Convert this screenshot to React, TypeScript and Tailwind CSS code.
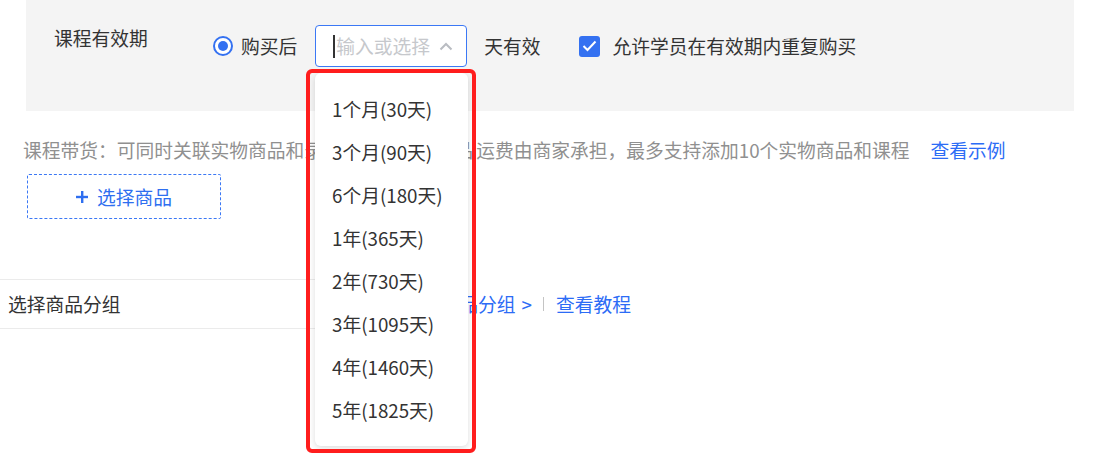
import React from "react";

const BLUE = "text-[#2c6cf6]";

export default function App() {
  const items = [
    "1个月(30天)",
    "3个月(90天)",
    "6个月(180天)",
    "1年(365天)",
    "2年(730天)",
    "3年(1095天)",
    "4年(1460天)",
    "5年(1825天)",
  ];
  return (
    <div
      className="relative w-[1103px] h-[464px] bg-white overflow-hidden text-[#333] text-[18.75px]"
      style={{ fontFamily: '"Noto Sans CJK SC", "Noto Sans", sans-serif' }}
    >
      {/* gray panel */}
      <div className="ml-[26px] w-[1048px] h-[111px] bg-[#f4f4f4] flex pt-[25px]">
        <div className="w-[187px] pl-[28px] leading-[26px]">课程有效期</div>
        <div className="flex items-center h-[42px]">
          <div className="w-[20px] h-[20px] rounded-full border-2 border-[#3471f1] bg-white flex items-center justify-center">
            <div className="w-[10px] h-[10px] rounded-full bg-[#3471f1]" />
          </div>
          <span className="ml-[8px] leading-[26px]">购买后</span>
          <div className="ml-[18px] w-[152px] h-[42px] rounded-[4px] border border-[#3b78f5] bg-white flex items-center pl-[17px] pr-[13px]">
            <div className="w-[2px] h-[23px] bg-[#333]" />
            <span className="ml-[1px] text-[#c6c8cc] leading-[26px]">输入或选择</span>
            <svg className="ml-auto" width="14" height="9" viewBox="0 0 14 9" fill="none">
              <polyline points="1.5,7.5 7,2 12.5,7.5" stroke="#b9bcc2" strokeWidth="2" fill="none" />
            </svg>
          </div>
          <span className="ml-[17px] leading-[26px]">天有效</span>
          <div className="ml-[38px] w-[21px] h-[21px] rounded-[3px] bg-[#3471f1] flex items-center justify-center">
            <svg width="15" height="12" viewBox="0 0 15 12" fill="none">
              <polyline points="1.5,6 5.5,10 13.5,1.5" stroke="white" strokeWidth="2" fill="none" />
            </svg>
          </div>
          <span className="ml-[13px] leading-[26px]">允许学员在有效期内重复购买</span>
        </div>
      </div>

      {/* description */}
      <div className="mt-[26px] pl-[23px] flex items-center leading-[26px] whitespace-nowrap">
        <span className="text-[#909090]">课程带货：可同时关联实物商品和</span>
        <span className="inline-block w-[172px] overflow-hidden text-[#909090]">录播课程，实物商品</span>
        <span className="text-[#909090]">运费由商家承担，最多支持添加10个实物商品和课程</span>
        <span className={`ml-[21px] ${BLUE}`}>查看示例</span>
      </div>

      <div className="mt-[11px] ml-[27px] w-[194px] h-[45px] border border-dashed border-[#3b78f5] rounded-[2px] flex items-center justify-center text-[#2f6ff0]">
        <svg width="12" height="12" viewBox="0 0 12 12">
          <rect x="5" y="0" width="2.4" height="12" fill="#2f6ff0" />
          <rect x="0" y="4.8" width="12" height="2.4" fill="#2f6ff0" />
        </svg>
        <span className="ml-[9px] leading-[26px]">选择商品</span>
      </div>

      {/* group row */}
      <div className="mt-[60px] flex items-center h-[50px] whitespace-nowrap">
        <div className="w-[403px] h-[50px] border-y border-[#ebebeb] flex items-center pl-[8px]">
          选择商品分组
        </div>
        <span className={`${BLUE} leading-[26px]`}>新建商品分组</span>
        <span className={`${BLUE} ml-[6px] leading-[26px]`}>&gt;</span>
        <div className="ml-[11px] w-px h-[14px] bg-[#c4c4c4]" />
        <span className={`ml-[12px] ${BLUE} leading-[26px]`}>查看教程</span>
      </div>

      {/* dropdown */}
      <div className="absolute left-[315px] top-[73px] w-[153px] h-[373px] bg-white rounded-[6px] shadow-[0_2px_6px_rgba(0,0,0,0.14)] pt-[15px]">
        {items.map((t) => (
          <div key={t} className="h-[43px] flex items-center pl-[17px] text-[#333] whitespace-nowrap">
            {t}
          </div>
        ))}
      </div>

      {/* red annotation */}
      <div className="absolute left-[306px] top-[69px] w-[170px] h-[384px] border-4 border-[#ff1d1d] rounded-[6px]" />
    </div>
  );
}
